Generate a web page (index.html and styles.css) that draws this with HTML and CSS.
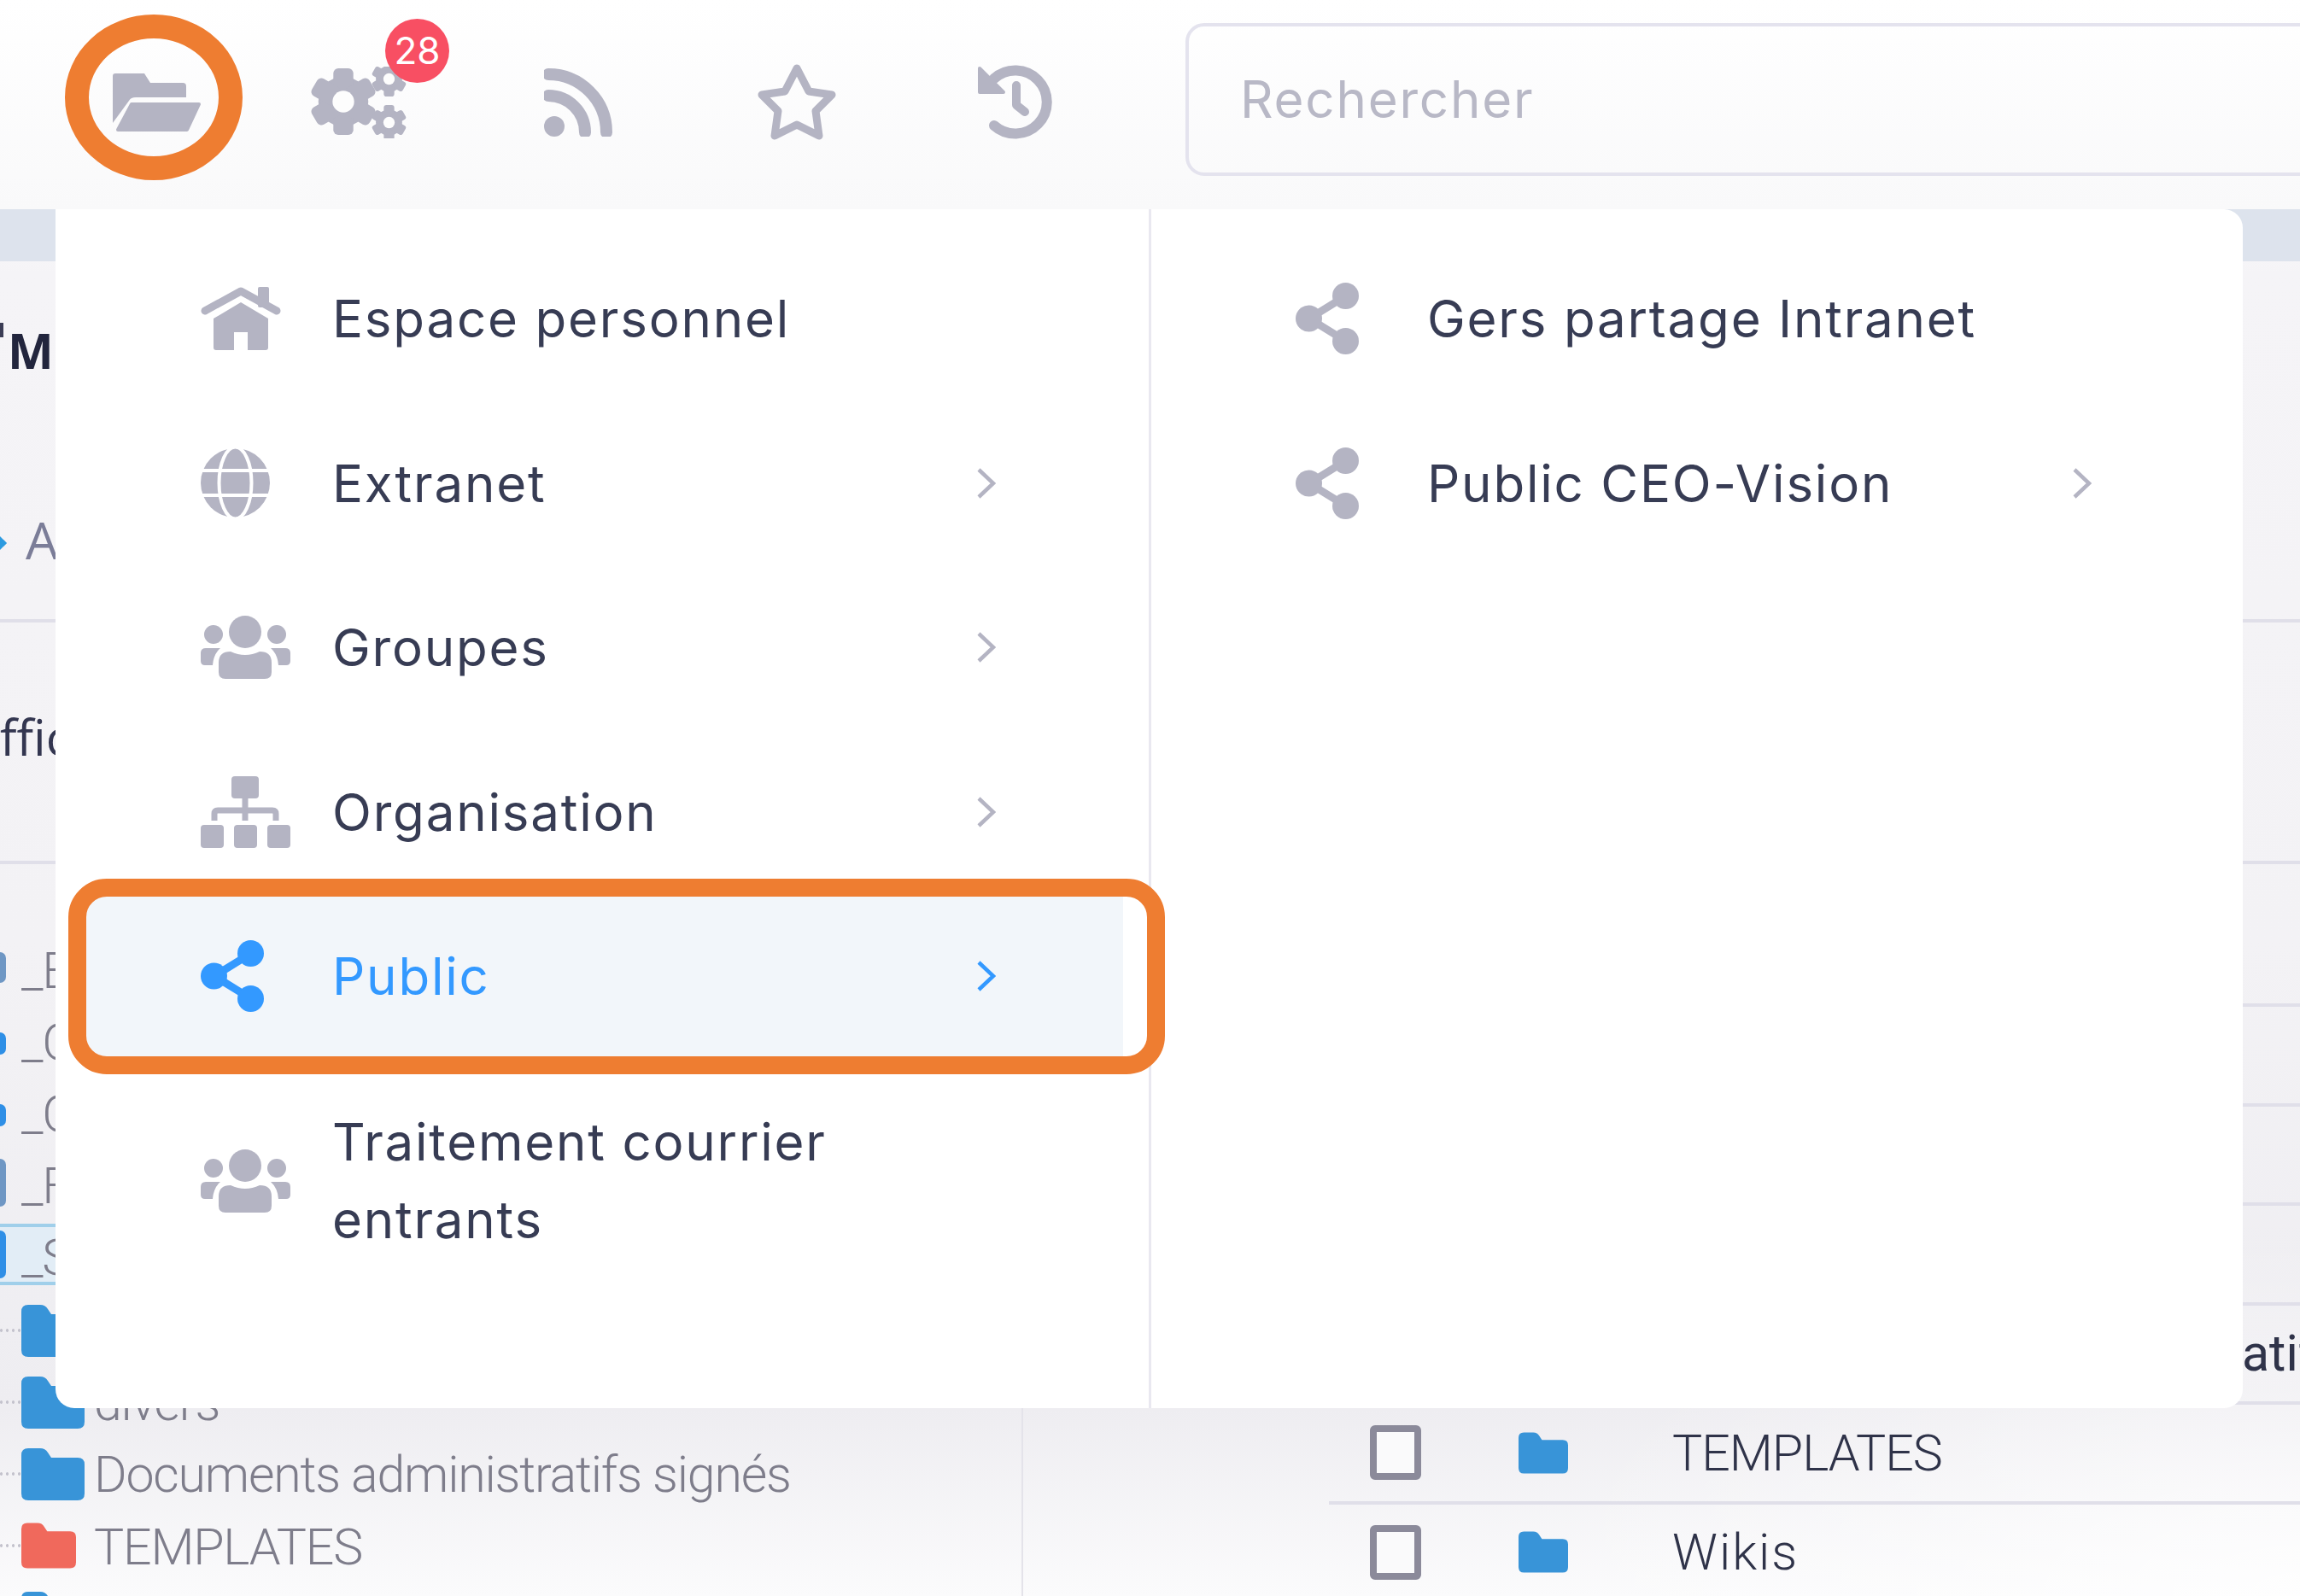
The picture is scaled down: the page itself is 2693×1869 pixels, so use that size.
FILE: index.html
```html
<!DOCTYPE html>
<html lang="fr">
<head>
<meta charset="utf-8">
<title>Espace personnel</title>
<link rel="stylesheet" href="styles.css">
</head>
<body>
	<svg class="sprite" width="0" height="0">
		<symbol id="i-share" viewBox="0 0 74 84">
			<path d="M58 16 16 42 58 68" fill="none" stroke="currentColor" stroke-width="9"/>
			<circle cx="58.500" cy="15.500" r="15.500" fill="currentColor"/>
			<circle cx="15.500" cy="42" r="15.500" fill="currentColor"/>
			<circle cx="58.500" cy="68.500" r="15.500" fill="currentColor"/>
		</symbol>
		<symbol id="i-group" viewBox="0 0 105 74">
			<circle cx="52" cy="19" r="19" fill="currentColor"/>
			<circle cx="15" cy="22" r="11" fill="currentColor"/>
			<circle cx="89" cy="22" r="11" fill="currentColor"/>
			<path d="M21 55Q21 42 35 42Q52 50 69 42Q83 42 83 55V66Q83 74 75 74H29Q21 74 21 66Z" fill="currentColor"/>
			<path d="M0 44Q0 38 6 38H23Q15 45 14 58H5Q0 58 0 53Z" fill="currentColor"/>
			<path d="M105 44Q105 38 99 38H82Q90 45 91 58H100Q105 58 105 53Z" fill="currentColor"/>
		</symbol>
		<symbol id="i-folder" viewBox="0 0 74 61">
			<path d="M8 0H22Q28 0 31 5L35 11H66Q74 11 74 19V53Q74 61 66 61H8Q0 61 0 53V8Q0 0 8 0Z" fill="currentColor"/>
		</symbol>
		<symbol id="i-chevron" viewBox="0 0 23 36">
			<path d="M3 2 20 18 3 34" fill="none" stroke="currentColor" stroke-width="4.500"/>
		</symbol>
		<symbol id="i-gear" viewBox="0 0 80 80">
			<circle cx="40" cy="40" r="30" fill="currentColor"/>
			<rect x="28" y="0" width="24" height="80" rx="6" fill="currentColor"/>
			<rect x="28" y="0" width="24" height="80" rx="6" fill="currentColor" transform="rotate(60 40 40)"/>
			<rect x="28" y="0" width="24" height="80" rx="6" fill="currentColor" transform="rotate(120 40 40)"/>
			<circle cx="40" cy="40" r="13" fill="#fdfdfd"/>
		</symbol>
	</svg>

	<div class="page">
		<header class="topbar">
			<div class="tool tool-first">
				<svg width="103" height="68" viewBox="0 0 103 68">
					<path d="M0 3Q0 0 3 0H37L44 11H82Q86 11 86 15V28H27Q21 28 19 32L0 58Z" fill="currentColor"/>
					<path d="M22 36H101L87 66H6Z" fill="currentColor" stroke="currentColor" stroke-width="4" stroke-linejoin="round"/>
				</svg>
				<div class="ring"></div>
			</div>
			<div class="tool tool-gears">
				<svg width="114" height="84" viewBox="0 0 114 84">
					<use href="#i-gear" x="0" y="2" width="78" height="78"/>
					<use href="#i-gear" x="72" y="-6" width="41" height="41"/>
					<use href="#i-gear" x="72" y="45" width="41" height="41"/>
				</svg>
				<span class="badge">28</span>
			</div>
			<div class="tool">
				<svg width="80" height="80" viewBox="0 0 80 80">
					<circle cx="12" cy="68" r="12" fill="currentColor"/>
					<path d="M5 7A68 68 0 0 1 73 75M5 32A43 43 0 0 1 48 75" fill="none" stroke="currentColor" stroke-width="14" stroke-linecap="round"/>
				</svg>
			</div>
			<div class="tool">
				<svg width="94" height="92" viewBox="0 0 94 92">
					<path d="M47 6 61 33 88 37 69 56 73 85 47 72 21 85 25 56 6 37 33 33Z" fill="none" stroke="currentColor" stroke-width="9" stroke-linejoin="round"/>
				</svg>
			</div>
			<div class="tool">
				<svg width="88" height="88" viewBox="0 0 88 88">
					<path d="M19 71A37 37 0 1 0 19 16" fill="none" stroke="currentColor" stroke-width="12" stroke-linecap="round"/>
					<path d="M2 4V32H30Z" fill="currentColor" stroke="currentColor" stroke-width="4" stroke-linejoin="round"/>
					<path d="M45 24V47L55 55" fill="none" stroke="currentColor" stroke-width="10" stroke-linecap="round" stroke-linejoin="round"/>
				</svg>
			</div>
			<div class="search">Rechercher</div>
		</header>
		<div class="band"></div>

		<section class="heading">
			<div class="heading-title"><i class="heading-tick"></i>Me</div>
			<div class="heading-link"><i class="heading-arrow"></i>A</div>
		</section>
		<section class="toolbar">ffic</section>

		<div class="panes">
			<aside class="tree">
				<div class="tree-row"><i class="stub stub-dark"></i><span>_E</span></div>
				<div class="tree-row"><i class="stub stub-blue stub-low"></i><span>_C</span></div>
				<div class="tree-row"><i class="stub stub-blue stub-low"></i><span>_C</span></div>
				<div class="tree-row"><i class="stub stub-dark stub-tall"></i><span>_F</span></div>
				<div class="tree-row tree-selected"><i class="stub stub-blue stub-tall"></i><span>_S</span></div>
				<div class="tree-row tree-folder"><i class="dots"></i><svg class="folder-icon"><use href="#i-folder"/></svg></div>
				<div class="tree-row tree-folder"><i class="dots"></i><svg class="folder-icon"><use href="#i-folder"/></svg><span>divers</span></div>
				<div class="tree-row tree-folder"><i class="dots"></i><svg class="folder-icon"><use href="#i-folder"/></svg><span>Documents administratifs signés</span></div>
				<div class="tree-row tree-folder tree-red"><i class="dots"></i><svg class="folder-icon"><use href="#i-folder"/></svg><span>TEMPLATES</span></div>
				<div class="tree-row tree-folder"><i class="dots"></i><svg class="folder-icon"><use href="#i-folder"/></svg></div>
			</aside>
			<main class="list">
				<div class="list-head"></div>
				<div class="list-row"></div>
				<div class="list-row"></div>
				<div class="list-row"></div>
				<div class="list-row"><span class="list-cut">atif</span></div>
				<div class="list-row">
					<i class="check"></i>
					<svg class="list-folder"><use href="#i-folder"/></svg>
					<span class="list-tight">TEMPLATES</span>
				</div>
				<div class="list-row">
					<i class="check"></i>
					<svg class="list-folder"><use href="#i-folder"/></svg>
					<span class="list-wide">Wikis</span>
				</div>
			</main>
		</div>

		<nav class="dropdown">
			<ul class="menu menu-left">
				<li class="item">
					<span class="item-icon">
						<svg width="94" height="74" viewBox="0 0 94 74">
							<rect x="67" y="0" width="13" height="24" rx="2" fill="currentColor"/>
							<path d="M5 28 47 5 89 28" fill="none" stroke="currentColor" stroke-width="9" stroke-linecap="round" stroke-linejoin="round"/>
							<path d="M47 18 79 37V71Q79 74 76 74H55V53H39V74H18Q15 74 15 71V37Z" fill="currentColor"/>
						</svg>
					</span>
					<span>Espace personnel</span>
				</li>
				<li class="item">
					<span class="item-icon">
						<svg width="81" height="81" viewBox="0 0 81 81">
							<circle cx="40.500" cy="40.500" r="40.500" fill="currentColor"/>
							<ellipse cx="40.500" cy="40.500" rx="19" ry="42" fill="none" stroke="#fff" stroke-width="4"/>
							<path d="M0 26H81M0 55H81" stroke="#fff" stroke-width="4"/>
						</svg>
					</span>
					<span>Extranet</span>
					<svg class="chevron"><use href="#i-chevron"/></svg>
				</li>
				<li class="item">
					<span class="item-icon"><svg class="group-icon"><use href="#i-group"/></svg></span>
					<span>Groupes</span>
					<svg class="chevron"><use href="#i-chevron"/></svg>
				</li>
				<li class="item">
					<span class="item-icon">
						<svg width="105" height="84" viewBox="0 0 105 84">
							<rect x="36" y="0" width="32" height="26" rx="4" fill="currentColor"/>
							<path d="M52 26V52M16 52V44Q16 40 20 40H84Q88 40 88 44V52" fill="none" stroke="currentColor" stroke-width="7"/>
							<rect x="0" y="57" width="27" height="27" rx="4" fill="currentColor"/>
							<rect x="39" y="57" width="27" height="27" rx="4" fill="currentColor"/>
							<rect x="78" y="57" width="27" height="27" rx="4" fill="currentColor"/>
						</svg>
					</span>
					<span>Organisation</span>
					<svg class="chevron"><use href="#i-chevron"/></svg>
				</li>
				<li class="item item-active">
					<span class="item-icon"><svg class="share-icon"><use href="#i-share"/></svg></span>
					<span>Public</span>
					<svg class="chevron"><use href="#i-chevron"/></svg>
				</li>
				<li class="item item-double">
					<span class="item-icon"><svg class="group-icon"><use href="#i-group"/></svg></span>
					<span class="item-wrap">Traitement courrier entrants</span>
				</li>
			</ul>
			<ul class="menu menu-right">
				<li class="item">
					<span class="item-icon"><svg class="share-icon"><use href="#i-share"/></svg></span>
					<span>Gers partage Intranet</span>
				</li>
				<li class="item">
					<span class="item-icon"><svg class="share-icon"><use href="#i-share"/></svg></span>
					<span>Public CEO-Vision</span>
					<svg class="chevron"><use href="#i-chevron"/></svg>
				</li>
			</ul>
			<div class="highlight"></div>
		</nav>
	</div>
</body>
</html>
```

FILE: styles.css
```css
*{
	margin: 0;
	padding: 0;
	box-sizing: border-box;
	list-style: none;
}

html,body{
	height: 100%;
	overflow: hidden;
}

.sprite{
	position: absolute;
}

.page{
	position: relative;
	height: 1869px;
	overflow: hidden;
	display: flex;
	flex-direction: column;
	font-family: "Roboto", sans-serif;
	background:
		radial-gradient(ellipse 900px 420px at 100% 100%, rgba(255,255,255,.75), rgba(255,255,255,0)),
		linear-gradient(#fff 0, #f9f9fa 245px, #f5f4f7 320px, #f3f2f5 1100px, #eeedf1 1650px, #fbfbfc 1869px);
}

/* barre du haut */
.topbar{
	flex: 0 0 245px;
	display: flex;
	align-items: center;
	padding: 0 0 6px 55px;
	color: #b4b4c3;
}
.tool{
	position: relative;
	flex: 0 0 256px;
	display: flex;
	justify-content: center;
	align-items: center;
}
.tool-first{
	flex-basis: 238px;
	padding-left: 19px;
}
.tool-gears svg{
	margin-left: -3px;
}
.ring{
	position: absolute;
	left: 21px;
	top: -69px;
	width: 208px;
	height: 194px;
	border: 28px solid #ee7d31;
	border-radius: 50%;
}
.badge{
	position: absolute;
	left: 158px;
	top: -56px;
	width: 75px;
	height: 75px;
	border-radius: 50%;
	background-color: #f84f63;
	color: #fff;
	font-family: "Inter", sans-serif;
	font-size: 44px;
	line-height: 75px;
	text-align: center;
}
.search{
	flex: 1;
	align-self: flex-start;
	height: 179px;
	margin: 27px -40px 0 71px;
	padding-left: 60px;
	border: 4px solid #e4e3ee;
	border-radius: 22px;
	color: #b8b8c6;
	font-family: "Inter", sans-serif;
	font-size: 60px;
	letter-spacing: 1.800px;
	line-height: 171px;
}
.band{
	flex: 0 0 61px;
	background-color: #dde3ed;
}

/* contenu sous le menu */
.heading{
	flex: 0 0 423px;
	height: 423px;
	border-bottom: 4px solid #e0dfe9;
	font-family: "Open Sans", sans-serif;
}
.heading-title{
	height: 208px;
	padding-left: 9px;
	color: #22253d;
	font-size: 57px;
	font-weight: 700;
	line-height: 208px;
	position: relative;
}
.heading-tick{
	position: absolute;
	left: 0;
	top: 72px;
	width: 4px;
	height: 17px;
	background-color: #3b3d55;
}
.heading-link{
	padding: 28px 0 0 30px;
	color: #7b7d98;
	font-size: 60px;
	line-height: 181px;
	position: relative;
}
.heading-arrow{
	position: absolute;
	left: -9px;
	top: 115px;
	width: 14px;
	height: 14px;
	border-top: 6px solid #2d9be0;
	border-right: 6px solid #2d9be0;
	transform: rotate(45deg);
}
.toolbar{
	flex: 0 0 283px;
	border-bottom: 4px solid #e0dfe9;
	color: #333650;
	font-family: "Open Sans", sans-serif;
	font-size: 58px;
	line-height: 268px;
}

.panes{
	flex: 1;
	display: flex;
}
.tree{
	flex: 0 0 1198px;
	padding-top: 79px;
	border-right: 2px solid #e4e3ea;
	color: #7e7d8b;
	font-size: 59px;
	font-weight: 300;
	letter-spacing: -1.200px;
}
.tree-row{
	height: 84px;
	display: flex;
	align-items: center;
	white-space: nowrap;
}
.tree-row span{
	margin-left: 18px;
	padding-top: 7px;
}
.tree-selected{
	height: 72px;
	margin: 6px 0 11px;
	border-top: 4px solid #a0cfea;
	border-bottom: 4px solid #a0cfea;
	background-color: #e2edf6;
}
.stub{
	flex: 0 0 7px;
	height: 36px;
	border-radius: 0 7px 7px 0;
}
.stub-dark{
	background-color: #6f97c4;
}
.stub-blue{
	background-color: #2f8fe6;
}
.stub-low{
	height: 26px;
	margin-top: 10px;
}
.stub-tall{
	height: 56px;
}
.dots{
	flex: 0 0 25px;
	height: 4px;
	background-image: radial-gradient(circle, #c4c3cd 1.500px, transparent 2px);
	background-size: 7px 4px;
	background-position: 5px 0;
	background-repeat: repeat-x;
}
.tree-folder{
	color: #7e7d8b;
}
.folder-icon{
	flex: 0 0 74px;
	height: 61px;
	color: #3894d8;
}
.tree-folder span{
	margin-left: 11px;
	padding-top: 0;
}
.tree-red .folder-icon{
	flex-basis: 64px;
	height: 56px;
	color: #f0695c;
}
.tree-red span{
	margin-left: 21px;
	padding-top: 3px;
}

.list{
	flex: 1;
	display: flex;
	flex-direction: column;
	padding-left: 358px;
	color: #2f3349;
	font-size: 59px;
	font-weight: 300;
}
.list-head{
	flex: 0 0 167px;
	border-bottom: 4px solid #e0dfe9;
}
.list-row{
	flex: 0 0 116.500px;
	display: flex;
	align-items: center;
	padding-left: 48px;
	border-bottom: 4px solid #e0dfe9;
}
.list-cut{
	margin-left: 1021px;
	font-weight: 400;
}
.list-tight{
	letter-spacing: -1px;
}
.list-wide{
	letter-spacing: 2px;
}
.check{
	flex: 0 0 60px;
	height: 64px;
	border: 8px solid #8b8a9a;
	border-radius: 6px;
	background-color: #fafafb;
}
.list-folder{
	flex: 0 0 58px;
	height: 49px;
	margin: 0 122px 0 114px;
	color: #3894d8;
}

/* menu deroulant */
.dropdown{
	position: absolute;
	left: 65px;
	top: 245px;
	width: 2561px;
	height: 1404px;
	display: grid;
	grid-template-columns: 1283px 1fr;
	background-color: #fff;
	border-radius: 0 22px 22px 22px;
	color: #373c54;
	font-family: "Inter", sans-serif;
	font-size: 60px;
	letter-spacing: 1.800px;
}
.menu{
	padding-top: 32px;
}
.menu-left{
	padding-left: 35px;
	border-right: 3px solid #e9e8f0;
}
.item{
	display: flex;
	align-items: center;
	min-height: 192.500px;
}
.menu-left .item{
	width: 1215px;
	padding: 0 149px 0 135px;
}
.menu-right .item{
	padding: 0 177px 0 169px;
}
.item-icon{
	flex: 0 0 154px;
	display: flex;
	align-items: center;
	color: #b4b4c3;
}
.group-icon{
	width: 105px;
	height: 74px;
}
.share-icon{
	width: 74px;
	height: 84px;
}
.chevron{
	width: 23px;
	height: 36px;
	margin-left: auto;
	color: #b4b4c3;
}
.item-active{
	background-color: #f2f6fa;
	color: #3399ff;
}
.item-active .item-icon,
.item-active .chevron{
	color: #3399ff;
}
.menu-left .item-double{
	padding-top: 52px;
	padding-bottom: 52px;
}
.item-wrap{
	max-width: 700px;
	line-height: 91px;
}
.highlight{
	position: absolute;
	left: 15px;
	top: 784px;
	width: 1284px;
	height: 229px;
	border: 21px solid #ee7d31;
	border-radius: 45px;
}
```
